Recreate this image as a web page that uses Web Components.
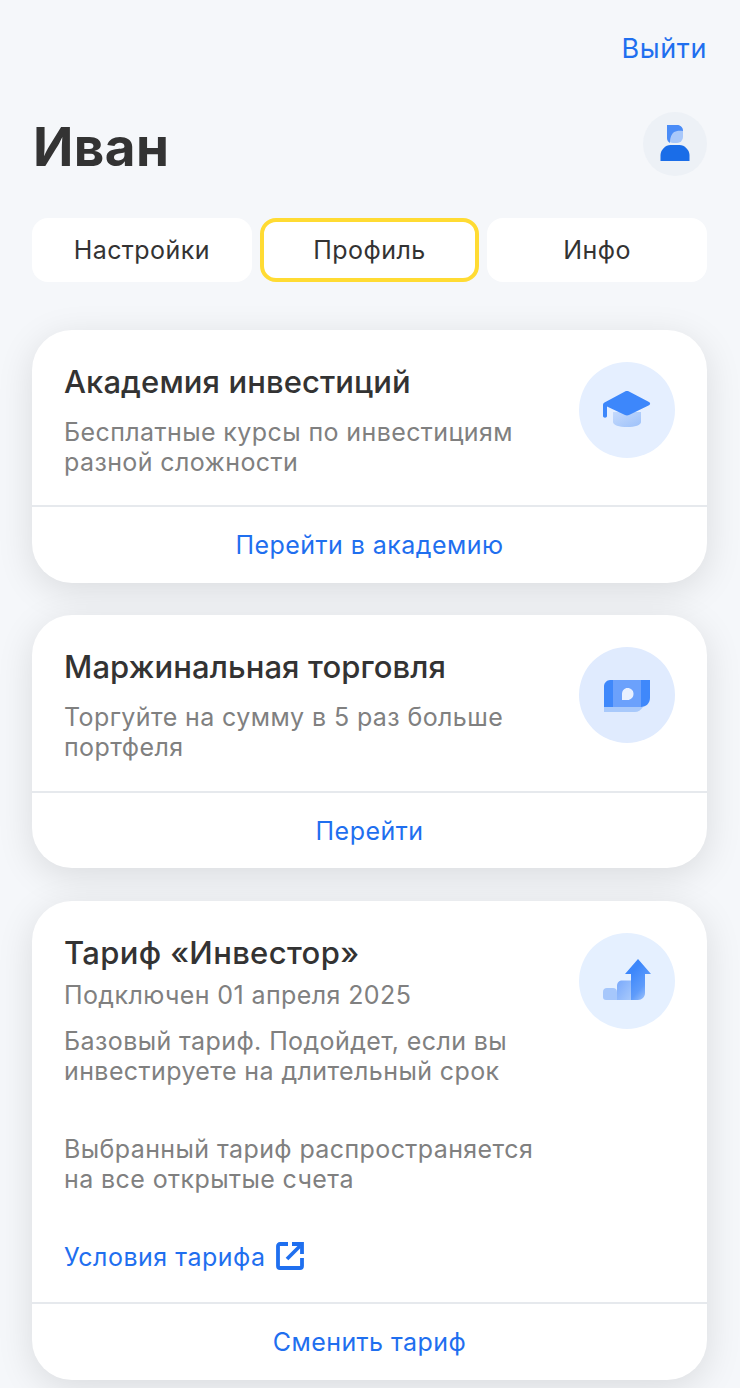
<!DOCTYPE html>
<html lang="ru"><head><meta charset="utf-8">
<style>
html,body{margin:0;padding:0;background:#f5f7fa;font-family:Inter,"Noto Sans",sans-serif;color:#333;height:1388px;overflow:hidden}
app-page{display:block}
</style></head><body>
<template id="t-card"><style>
:host{display:block;background:#fff;border-radius:40px;box-shadow:0 8px 36px rgba(0,0,0,.115);overflow:hidden}
.top{display:flex;justify-content:space-between;padding:32px 32px 0;box-sizing:border-box;height:var(--top-h,175px)}
.text{min-width:0}
.icon{width:96px;height:96px;flex:none}
::slotted([slot=title]){display:block;margin:0;font-size:31px;line-height:40px;font-weight:500;color:#333;letter-spacing:.1px}
.foot{border-top:2px solid #e6e9ed;height:var(--foot-h,76px);display:flex;align-items:center;justify-content:center;font-size:25px;color:#1f6fef;letter-spacing:.45px}
</style><div class="top"><div class="text"><slot name="title"></slot><slot></slot></div><div class="icon"><slot name="icon"></slot></div></div><div class="foot"><slot name="action"></slot></div></template>

<template id="t-tabs"><style>
:host{display:grid;grid-template-columns:repeat(3,1fr);gap:8px;margin:0 0 48px;width:675px}
</style><slot></slot></template>

<template id="t-tab"><style>
:host{display:flex;align-items:center;justify-content:center;height:64px;box-sizing:border-box;background:#fff;border-radius:16px;font-size:25px;letter-spacing:.45px;color:#333}
:host([active]){border:4px solid #ffdb33}
</style><slot></slot></template>

<template id="t-page"><style>
:host{display:block;padding:32px 32px 0 32px}
.logout{display:flex;justify-content:flex-end;font-size:27px;line-height:34px;color:#1f6fef;letter-spacing:.6px;height:32px;padding-right:1px}
.head{display:flex;justify-content:space-between;align-items:center;margin:48px 0 42px;height:64px}
h1{margin:6px 0 0 1px;font-size:53px;font-weight:700;line-height:64px;color:#333;letter-spacing:.4px}
.av{width:64px;height:64px;margin-right:1px;border-radius:50%;background:#edf1f6;display:block}
</style>
<div class="logout">Выйти</div>
<div class="head"><h1>Иван</h1>
<svg class="av" viewBox="0 0 64 64"><path d="M24 13h10a6 6 0 0 1 6 6v6a6 6 0 0 1-6 6h-4a6 6 0 0 1-6-6z" fill="#a9c8fa"/><path d="M24 13h10c3.500 0 6 2.500 6 6-4-.5-7.500 0-9.500 1.500-2 2-3.500 5-3.500 10.500-2-1-3-3-3-5z" fill="#4a8cf7"/><path d="M17.500 49v-6c0-5 5-10 10-10h9c5 0 10 5 10 10v6z" fill="#1a6de8"/></svg></div>
<slot></slot></template>

<template id="t-p"><style>
:host{display:block;font-size:25px;line-height:30px;color:#808080;letter-spacing:.4px}
</style><slot></slot></template>

<template id="t-ext"><style>
:host{display:flex;align-items:center;gap:9px;font-size:25px;line-height:32px;color:#1f6fef;letter-spacing:.5px}
svg{width:30px;height:30px;flex:none;margin-top:-2px}
</style><slot></slot><svg viewBox="0 0 30 30" fill="none" stroke="#1f6fef" stroke-width="3.800"><path d="M13 3H5a2 2 0 0 0-2 2v20a2 2 0 0 0 2 2h20a2 2 0 0 0 2-2V17"/><path d="M12 18 25 5"/><path d="M17 3h10v10"/></svg></template>

<app-page>
<tab-bar><tab-item>Настройки</tab-item><tab-item active>Профиль</tab-item><tab-item>Инфо</tab-item></tab-bar>
<div style="display:flex;flex-direction:column;gap:32px;width:675px">
<info-card>
<span slot="title">Академия инвестиций</span>
<card-p style="margin-top:15px">Бесплатные курсы по инвестициям<br>разной сложности</card-p>
<svg slot="icon" width="96" height="96" viewBox="0 0 96 96" style="display:block"><defs><linearGradient id="g1" x1="0" y1="0" x2="1" y2="1"><stop offset="0" stop-color="#c5dafc"/><stop offset="1" stop-color="#9dc1fa"/></linearGradient></defs><circle cx="48" cy="48" r="48" fill="#e5efff"/><path d="M34 50h28v10c0 3-6 5-14 5s-14-2-14-5z" fill="url(#g1)"/><path d="M24 54V43c0-1 .5-2 1.500-2.500L46 29.500c1.300-.6 2.700-.6 4 0L70 40c1.500.8 1.500 2.400 0 3.200L50 53c-1.300.6-2.700.6-4 0L28 44.500V54c0 2.300-4 2.300-4 0z" fill="#3d87fb"/></svg>
<span slot="action">Перейти в академию</span>
</info-card>
<info-card style="--top-h:176px;--foot-h:75px">
<span slot="title">Маржинальная торговля</span>
<card-p style="margin-top:15px">Торгуйте на сумму в 5 раз больше<br>портфеля</card-p>
<svg slot="icon" width="96" height="96" viewBox="0 0 96 96" style="display:block"><circle cx="48" cy="48" r="48" fill="#e0ebfe"/><path d="M25 60v5h31c3 0 6-2 8-5z" fill="#a8c9fb"/><path d="M25 39c0-3 3-6 6-6h3v27h-9z" fill="#3f88fb"/><path d="M62 33h9v18c0 5-4 9-9 9z" fill="#3f88fb"/><rect x="34" y="33" width="28" height="27" fill="#6ba1fc"/><path d="M43 47c0-3.500 2.500-6 5.500-6 3.500 0 6 2.500 6 6s-3 6-6 6H43z" fill="#e8f0ff"/></svg>
<span slot="action">Перейти</span>
</info-card>
<info-card style="--top-h:401px;margin-top:1px">
<span slot="title" style="margin-top:0;letter-spacing:.35px">Тариф «Инвестор»</span>
<card-p style="margin-top:7px;margin-bottom:16px">Подключен 01 апреля 2025</card-p>
<card-p>Базовый тариф. Подойдет, если вы<br>инвестируете на длительный срок</card-p>
<card-p style="margin-top:48px">Выбранный тариф распространяется<br>на все открытые счета</card-p>
<ext-link style="margin-top:47px">Условия тарифа</ext-link>
<svg slot="icon" width="96" height="96" viewBox="0 0 96 96" style="display:block"><defs><linearGradient id="g2" x1="0.3" y1="0.3" x2="0.8" y2="1"><stop offset="0" stop-color="#3d87fb"/><stop offset=".6" stop-color="#5f9cfb"/><stop offset="1" stop-color="#a2c5fb"/></linearGradient><linearGradient id="g3" x1="0" y1="0" x2="1" y2="1"><stop offset="0" stop-color="#79a9fb"/><stop offset="1" stop-color="#a8c9fb"/></linearGradient></defs><circle cx="48" cy="48" r="48" fill="#e5f0ff"/><path d="M24 64V59c0-2.500 1.500-4 4-4h6c2.500 0 4 1.500 4 4v8H27c-2 0-3-1-3-3z" fill="#a6c7fb"/><path d="M38 67V53c0-3.500 2-5.500 5.500-5.500H52V67z" fill="url(#g3)"/><path d="M52 67V41h-6L59 26l13 15h-6v19c0 4-3 7-7 7z" fill="url(#g2)"/></svg>
<span slot="action">Сменить тариф</span>
</info-card>
</div>
</app-page>
<script>
function def(name,tpl){customElements.define(name,class extends HTMLElement{constructor(){super();this.attachShadow({mode:'open'}).appendChild(document.getElementById(tpl).content.cloneNode(true));}});}
def('app-page','t-page');def('tab-bar','t-tabs');def('tab-item','t-tab');def('info-card','t-card');def('card-p','t-p');def('ext-link','t-ext');
</script>
</body></html>
